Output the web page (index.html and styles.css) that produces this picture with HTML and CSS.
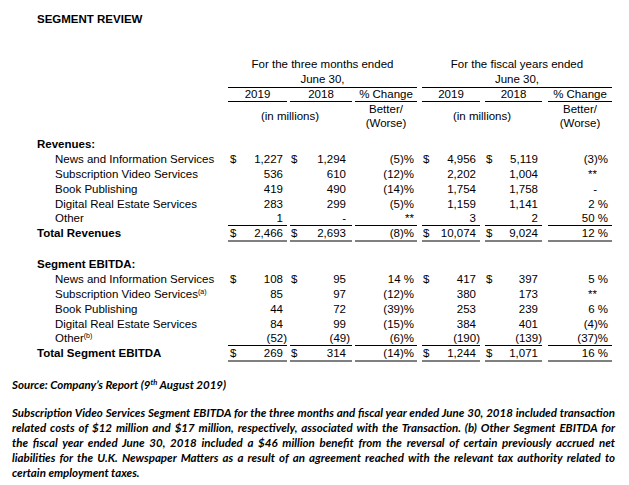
FILE: index.html
```html
<!DOCTYPE html>
<html>
<head>
<meta charset="utf-8">
<link rel="stylesheet" href="styles.css">
</head>
<body>
<div class="page">
  <div class="title">SEGMENT REVIEW</div>

  <div class="head">
    <div class="row h1">
      <div class="lab"></div>
      <div class="grp g1">For the three months ended<br>June 30,</div>
      <div class="grp g2">For the fiscal years ended<br>June 30,</div>
    </div>
    <div class="row h2">
      <div class="lab"></div>
      <div class="yr a">2019</div>
      <div class="yr b">2018</div>
      <div class="yr c">% Change</div>
      <div class="yr d">2019</div>
      <div class="yr e">2018</div>
      <div class="yr f">% Change</div>
    </div>
    <div class="row h3">
      <div class="lab"></div>
      <div class="mil m1">(in millions)</div>
      <div class="bw c">Better/<br>(Worse)</div>
      <div class="mil m2">(in millions)</div>
      <div class="bw f">Better/<br>(Worse)</div>
    </div>
  </div>

  <div class="section">
    <div class="row"><div class="lab sec">Revenues:</div></div>
    <div class="row">
      <div class="lab sub">News and Information Services</div>
      <div class="v a"><span>$</span><span class="n">1,227</span></div>
      <div class="v b"><span>$</span><span class="n">1,294</span></div>
      <div class="v c"><span class="n">(5)%</span></div>
      <div class="v d"><span>$</span><span class="n">4,956</span></div>
      <div class="v e"><span>$</span><span class="n">5,119</span></div>
      <div class="v f"><span class="n">(3)%</span></div>
    </div>
    <div class="row">
      <div class="lab sub">Subscription Video Services</div>
      <div class="v a"><span class="n">536</span></div>
      <div class="v b"><span class="n">610</span></div>
      <div class="v c"><span class="n">(12)%</span></div>
      <div class="v d"><span class="n">2,202</span></div>
      <div class="v e"><span class="n">1,004</span></div>
      <div class="v f"><span class="n mid">**</span></div>
    </div>
    <div class="row">
      <div class="lab sub">Book Publishing</div>
      <div class="v a"><span class="n">419</span></div>
      <div class="v b"><span class="n">490</span></div>
      <div class="v c"><span class="n">(14)%</span></div>
      <div class="v d"><span class="n">1,754</span></div>
      <div class="v e"><span class="n">1,758</span></div>
      <div class="v f"><span class="n mid">-</span></div>
    </div>
    <div class="row">
      <div class="lab sub">Digital Real Estate Services</div>
      <div class="v a"><span class="n">283</span></div>
      <div class="v b"><span class="n">299</span></div>
      <div class="v c"><span class="n">(5)%</span></div>
      <div class="v d"><span class="n">1,159</span></div>
      <div class="v e"><span class="n">1,141</span></div>
      <div class="v f"><span class="n">2 %</span></div>
    </div>
    <div class="row last">
      <div class="lab sub">Other</div>
      <div class="v a"><span class="n">1</span></div>
      <div class="v b"><span class="n">-</span></div>
      <div class="v c"><span class="n">**</span></div>
      <div class="v d"><span class="n">3</span></div>
      <div class="v e"><span class="n">2</span></div>
      <div class="v f"><span class="n">50 %</span></div>
    </div>
    <div class="row total">
      <div class="lab sec">Total Revenues</div>
      <div class="v a"><span>$</span><span class="n">2,466</span></div>
      <div class="v b"><span>$</span><span class="n">2,693</span></div>
      <div class="v c"><span class="n">(8)%</span></div>
      <div class="v d"><span>$</span><span class="n">10,074</span></div>
      <div class="v e"><span>$</span><span class="n">9,024</span></div>
      <div class="v f"><span class="n">12 %</span></div>
    </div>
  </div>

  <div class="section s2">
    <div class="row"><div class="lab sec">Segment EBITDA:</div></div>
    <div class="row">
      <div class="lab sub">News and Information Services</div>
      <div class="v a"><span>$</span><span class="n">108</span></div>
      <div class="v b"><span>$</span><span class="n">95</span></div>
      <div class="v c"><span class="n">14 %</span></div>
      <div class="v d"><span>$</span><span class="n">417</span></div>
      <div class="v e"><span>$</span><span class="n">397</span></div>
      <div class="v f"><span class="n">5 %</span></div>
    </div>
    <div class="row">
      <div class="lab sub">Subscription Video Services<sup>(a)</sup></div>
      <div class="v a"><span class="n">85</span></div>
      <div class="v b"><span class="n">97</span></div>
      <div class="v c"><span class="n">(12)%</span></div>
      <div class="v d"><span class="n">380</span></div>
      <div class="v e"><span class="n">173</span></div>
      <div class="v f"><span class="n mid">**</span></div>
    </div>
    <div class="row">
      <div class="lab sub">Book Publishing</div>
      <div class="v a"><span class="n">44</span></div>
      <div class="v b"><span class="n">72</span></div>
      <div class="v c"><span class="n">(39)%</span></div>
      <div class="v d"><span class="n">253</span></div>
      <div class="v e"><span class="n">239</span></div>
      <div class="v f"><span class="n">6 %</span></div>
    </div>
    <div class="row">
      <div class="lab sub">Digital Real Estate Services</div>
      <div class="v a"><span class="n">84</span></div>
      <div class="v b"><span class="n">99</span></div>
      <div class="v c"><span class="n">(15)%</span></div>
      <div class="v d"><span class="n">384</span></div>
      <div class="v e"><span class="n">401</span></div>
      <div class="v f"><span class="n">(4)%</span></div>
    </div>
    <div class="row last">
      <div class="lab sub">Other<sup>(b)</sup></div>
      <div class="v a"><span class="n neg">(52)</span></div>
      <div class="v b"><span class="n neg">(49)</span></div>
      <div class="v c"><span class="n">(6)%</span></div>
      <div class="v d"><span class="n neg">(190)</span></div>
      <div class="v e"><span class="n neg">(139)</span></div>
      <div class="v f"><span class="n">(37)%</span></div>
    </div>
    <div class="row total">
      <div class="lab sec">Total Segment EBITDA</div>
      <div class="v a"><span>$</span><span class="n">269</span></div>
      <div class="v b"><span>$</span><span class="n">314</span></div>
      <div class="v c"><span class="n">(14)%</span></div>
      <div class="v d"><span>$</span><span class="n">1,244</span></div>
      <div class="v e"><span>$</span><span class="n">1,071</span></div>
      <div class="v f"><span class="n">16 %</span></div>
    </div>
  </div>

  <div class="notes">
    <p class="source">Source: Company’s Report (9<sup>th</sup> August 2019)</p>
    <p class="para">
      <span class="ln">Subscription Video Services Segment EBITDA for the three months and fiscal year ended June 30, 2018 included transaction</span>
      <span class="ln">related costs of $12 million and $17 million, respectively, associated with the Transaction. (b) Other Segment EBITDA for</span>
      <span class="ln">the fiscal year ended June 30, 2018 included a $46 million benefit from the reversal of certain previously accrued net</span>
      <span class="ln">liabilities for the U.K. Newspaper Matters as a result of an agreement reached with the relevant tax authority related to</span>
      <span class="ln end">certain employment taxes.</span>
    </p>
  </div>
</div>
</body>
</html>
```

FILE: styles.css
```css
html, body {
  margin: 0;
  padding: 0;
  background: #ffffff;
}

.page {
  width: 629px;
  padding-top: 12px;
  color: #000;
  font-family: "Liberation Sans", Arial, sans-serif;
  font-size: 11.5px;
}

.title {
  margin-left: 37px;
  font-weight: bold;
  line-height: 14px;
}

.head {
  margin-top: 31px;
}

.row {
  display: grid;
  grid-template-columns: 191px 62px 65px 67px 63px 63px 64px;
  margin-left: 37px;
  line-height: 15px;
}

.grp {
  text-align: center;
  border-bottom: 1px solid #000;
  line-height: 15px;
}
.g1 { grid-column: 2 / 5; margin-right: 5px; }
.g2 { grid-column: 5 / 8; }

.h2 { line-height: 13px; }
.yr {
  text-align: center;
  border-bottom: 1px solid #000;
}

.h3 { line-height: 14px; }
.mil {
  align-self: center;
  text-align: center;
}
.m1 { grid-column: 2 / 4; margin-right: 3px; }
.m2 { grid-column: 5 / 7; margin-right: 6px; }
.bw { text-align: center; }

.a { margin-right: 3px; }
.b { margin-right: 3px; }
.c { margin-right: 5px; }
.d { margin-right: 5px; }
.e { margin-right: 6px; }
.f { margin-right: 0; }

.section { margin-top: 7px; }
.s2 { margin-top: 15px; }

.lab { white-space: nowrap; }
.sec { font-weight: bold; }
.sub { padding-left: 18px; }

sup {
  font-size: 7px;
  line-height: 0;
  vertical-align: 4px;
}

.v {
  display: flex;
  justify-content: space-between;
  white-space: nowrap;
}
.v .n { margin-left: auto; }
.v.a { padding: 0 4px 0 2px; }
.v.b { padding: 0 6px 0 1px; }
.v.c { padding: 0 3px 0 0; }
.v.d { padding: 0 4px 0 1px; }
.v.e { padding: 0 4px 0 1px; }
.v.f { padding: 0 4px 0 0; }
.v .neg { margin-right: -4px; }
.v .mid { margin-right: 11px; }

.last { line-height: 13px; }
.last .v { border-bottom: 1px solid #000; }
.total { line-height: 14px; }
.total .v { border-bottom: 2px solid #808080; }

.notes {
  margin-top: 15px;
  font-family: Lato, "Open Sans", sans-serif;
  font-style: italic;
  font-weight: 700;
  font-size: 11.5px;
  line-height: 15px;
}
.notes .source {
  margin: 0 0 0 12px;
}
.notes .source sup {
  font-size: 7.5px;
  vertical-align: 4px;
}
.notes .para {
  margin: 13px 0 0 12px;
  width: 603px;
}
.ln {
  display: block;
  text-align: justify;
  text-align-last: justify;
}
.ln.end { text-align-last: left; }
```
